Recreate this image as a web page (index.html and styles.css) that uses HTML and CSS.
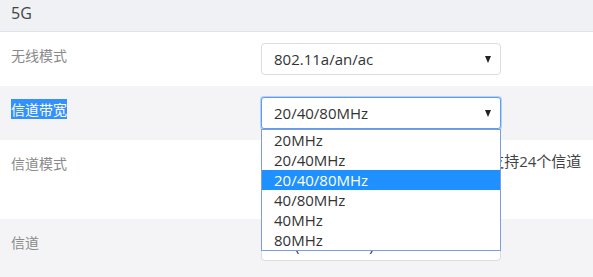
FILE: index.html
```html
<!DOCTYPE html>
<html lang="zh-CN">
<head>
<meta charset="utf-8">
<link rel="stylesheet" href="styles.css">
</head>
<body>
<div class="panel">
  <div class="panel-head">5G</div>
  <div class="row">
    <div class="label">无线模式</div>
    <div class="field">
      <div class="select"><span>802.11a/an/ac</span><i class="arrow"></i></div>
    </div>
  </div>
  <div class="row alt">
    <div class="label"><span class="sel-text">信道带宽</span></div>
    <div class="field">
      <div class="select focused"><span>20/40/80MHz</span><i class="arrow"></i>
        <ul class="dropdown">
          <li>20MHz</li>
          <li>20/40MHz</li>
          <li class="active">20/40/80MHz</li>
          <li>40/80MHz</li>
          <li>40MHz</li>
          <li>80MHz</li>
        </ul>
      </div>
    </div>
  </div>
  <div class="row tall">
    <div class="label">信道模式</div>
    <div class="field wide">
      <div class="note">中国标准，国家/地区代码为 CN，支持24个信道</div>
    </div>
  </div>
  <div class="row alt">
    <div class="label">信道</div>
    <div class="field">
      <div class="select low"><span>36 (5180 MHz)</span><i class="arrow"></i></div>
    </div>
  </div>
</div>
</body>
</html>
```
FILE: styles.css
```css
html, body {
  margin: 0;
  padding: 0;
  background: #f4f4f6;
}
body {
  width: 593px;
  height: 277px;
  overflow: hidden;
  font-family: "Noto Sans CJK SC", "Open Sans", sans-serif;
}
.panel {
  display: flex;
  flex-direction: column;
}
.panel-head {
  height: 32px;
  box-sizing: border-box;
  padding: 2px 0 0 11px;
  font-family: "Open Sans", sans-serif;
  font-size: 16px;
  line-height: 22px;
  color: #444;
  background: #f0f1f4;
  border-bottom: 1px solid #e2e3e8;
}
.row {
  display: grid;
  grid-template-columns: 250px 240px;
  padding-left: 11px;
  height: 54px;
  box-sizing: border-box;
  background: #fff;
}
.row.alt {
  background: #f4f4f6;
}
.row.tall {
  height: 79px;
}
.label {
  padding-top: 13px;
  font-size: 14px;
  line-height: 20px;
  color: #8a8a8a;
}
.sel-text {
  background: #3390ff;
  color: #fff;
}
.field {
  padding-top: 11px;
}
.field.wide {
  padding-top: 10px;
  white-space: nowrap;
}
.note {
  padding-left: 3px;
  font-size: 15px;
  line-height: 22px;
  color: #444;
  font-family: "Open Sans", "Noto Sans CJK SC", sans-serif;
}
.select {
  position: relative;
  height: 32px;
  box-sizing: border-box;
  border: 1px solid #dcdcdc;
  border-radius: 4px;
  background: #fff;
  display: flex;
  align-items: center;
  padding: 0 12px;
  font-family: "Open Sans", sans-serif;
  font-size: 15px;
  color: #333;
}
.select span {
  flex: 1;
}
.select.low {
  margin-top: -1px;
}
.select.focused {
  border: 1px solid #5d9cf5;
  box-shadow: 0 0 0 1px #b5d2fa;
  border-radius: 3px;
}
.arrow {
  width: 0;
  height: 0;
  border-left: 3.5px solid transparent;
  border-right: 3.5px solid transparent;
  border-top: 7px solid #222;
  margin-right: -3px;
}
.dropdown {
  position: absolute;
  left: -1px;
  top: 31px;
  width: 240px;
  box-sizing: border-box;
  margin: 0;
  padding: 0;
  list-style: none;
  background: #fff;
  border: 1px solid #7d9ede;
  z-index: 5;
}
.dropdown li {
  height: 20px;
  line-height: 20px;
  padding-left: 12px;
  font-size: 15px;
  color: #333;
}
.dropdown li.active {
  background: #1e90ff;
  color: #fff;
}
```
